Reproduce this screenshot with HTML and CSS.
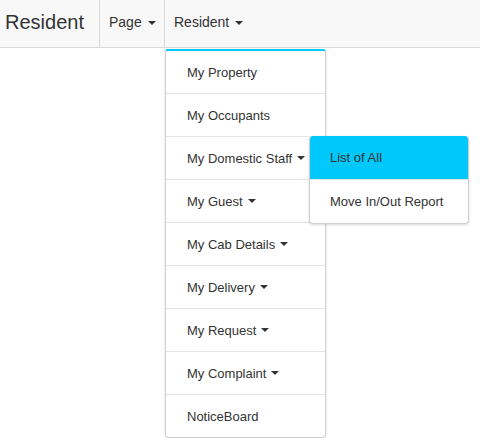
FILE: index.html
```html
<!DOCTYPE html>
<html>
<head>
<meta charset="utf-8">
<link rel="stylesheet" href="styles.css">
</head>
<body>
<nav class="topbar">
  <div class="brand">Resident</div>
  <div class="top-link top-page">Page <span class="caret"></span></div>
  <div class="top-link top-resident">Resident <span class="caret"></span></div>
</nav>
<div class="menus">
  <ul class="menu-panel">
    <li class="menu-row">My Property</li>
    <li class="menu-row">My Occupants</li>
    <li class="menu-row">My Domestic Staff <span class="caret"></span></li>
    <li class="menu-row">My Guest <span class="caret"></span></li>
    <li class="menu-row">My Cab Details <span class="caret"></span></li>
    <li class="menu-row">My Delivery <span class="caret"></span></li>
    <li class="menu-row">My Request <span class="caret"></span></li>
    <li class="menu-row">My Complaint <span class="caret"></span></li>
    <li class="menu-row">NoticeBoard</li>
  </ul>
  <ul class="side-panel">
    <li class="side-row side-active">List of All</li>
    <li class="side-row">Move In/Out Report</li>
  </ul>
</div>
</body>
</html>
```
FILE: styles.css
```css
* { box-sizing: border-box; }
html, body { margin: 0; padding: 0; background: #fff; }
body {
  font-family: "Liberation Sans", Arial, sans-serif;
  font-size: 14px;
  color: #333;
}
.topbar {
  display: flex;
  height: 48px;
  background: #f8f8f8;
  border-bottom: 1px solid #d8d8d8;
}
.brand {
  width: 100px;
  padding-left: 5px;
  font-size: 20px;
  line-height: 44px;
  border-right: 1px solid #d8d8d8;
}
.top-link {
  padding-left: 9px;
  line-height: 45px;
}
.top-page {
  width: 65px;
  border-right: 1px solid #d8d8d8;
}
.caret {
  display: inline-block;
  width: 0;
  height: 0;
  margin-left: 2px;
  vertical-align: middle;
  border-top: 4px solid #333;
  border-left: 4px solid transparent;
  border-right: 4px solid transparent;
}
.menus {
  display: flex;
  align-items: flex-start;
  margin: 1px 0 0 165px;
  font-size: 13px;
}
.menu-panel {
  flex: none;
  width: 161px;
  margin: 0;
  padding: 0;
  list-style: none;
  background: #fff;
  border: 1px solid #d0d0d0;
  border-top: 2px solid #00c8fb;
  border-radius: 3px 3px 4px 4px;
  box-shadow: 0 1px 3px rgba(0,0,0,0.12);
}
.menu-row {
  display: flex;
  align-items: center;
  gap: 4px;
  height: 43px;
  padding-left: 21px;
  border-bottom: 1px solid #e5e5e5;
  white-space: nowrap;
}
.menu-row:last-child { border-bottom: none; height: 42px; }
.menu-row .caret { margin-left: 1px; }
.side-panel {
  flex: none;
  position: relative;
  z-index: 2;
  width: 160px;
  margin: 87px 0 0 -17px;
  padding: 0;
  list-style: none;
  background: #fff;
  border: 1px solid #d0d0d0;
  border-top: none;
  border-radius: 4px;
  box-shadow: 0 1px 3px rgba(0,0,0,0.15);
  overflow: hidden;
}
.side-row {
  display: flex;
  align-items: center;
  height: 43px;
  padding-left: 20px;
  white-space: nowrap;
}
.side-active {
  background: #00c8fb;
  height: 44px;
  border-bottom: 1px solid #e5e5e5;
}
```
